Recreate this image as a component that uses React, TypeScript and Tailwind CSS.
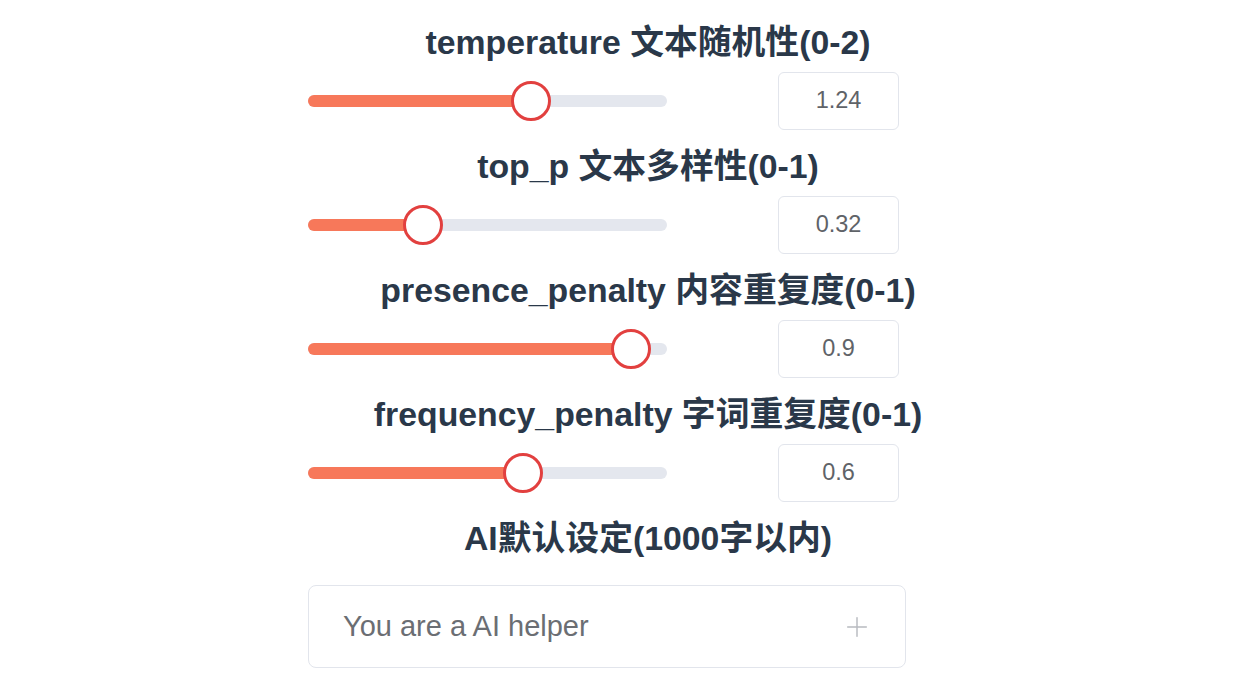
import { Plus } from 'lucide-react';

const params = [
  { label: 'temperature 文本随机性(0-2)', value: '1.24', frac: 0.62 },
  { label: 'top_p 文本多样性(0-1)', value: '0.32', frac: 0.32 },
  { label: 'presence_penalty 内容重复度(0-1)', value: '0.9', frac: 0.9 },
  { label: 'frequency_penalty 字词重复度(0-1)', value: '0.6', frac: 0.6 },
];

const font = { fontFamily: '"Liberation Sans", "Noto Sans CJK SC", sans-serif' };

function SliderRow({ label, value, frac }: { label: string; value: string; frac: number }) {
  return (
    <div className="flex flex-col pb-4">
      <div className="h-10 w-[680px] text-center text-[33.8px] font-bold leading-10 text-[#2a3849]">
        {label}
      </div>
      {/* Slider + number input */}
      <div className="mt-2.5 flex h-[58px] items-center">
        <div className="relative h-3 w-[359px] rounded-full bg-[#e4e7ee]">
          <div className="h-3 rounded-full bg-[#f7785a]" style={{ width: `${frac * 100}%` }} />
          <div
            className="absolute top-1/2 h-10 w-10 -translate-x-1/2 -translate-y-1/2 rounded-full border-[3px] border-[#e2403f] bg-white"
            style={{ left: `${frac * 100}%` }}
          />
        </div>
        <div className="ml-[111px] flex h-[58px] w-[121px] items-center justify-center rounded-md border border-[#e2e5ec] bg-white text-[23.5px] text-[#5f6368]">
          {value}
        </div>
      </div>
    </div>
  );
}

export default function App() {
  return (
    <div className="h-[700px] w-[1250px] bg-white pl-[308px] pt-[22px]" style={font}>
      {params.map(p => (
        <SliderRow key={p.label} {...p} />
      ))}
      <div className="h-10 w-[680px] text-center text-[33.8px] font-bold leading-10 text-[#2a3849]">
        AI默认设定(1000字以内)
      </div>
      <div className="mt-[27px] flex h-[83px] w-[598px] items-center justify-between rounded-lg border border-[#e2e5ec] pl-[34px] pr-[32px]">
        <span className="text-[29px] text-[#6b6e73]">You are a AI helper</span>
        <Plus size={32} strokeWidth={1.1} className="text-[#b8bbc0]" />
      </div>
    </div>
  );
}
